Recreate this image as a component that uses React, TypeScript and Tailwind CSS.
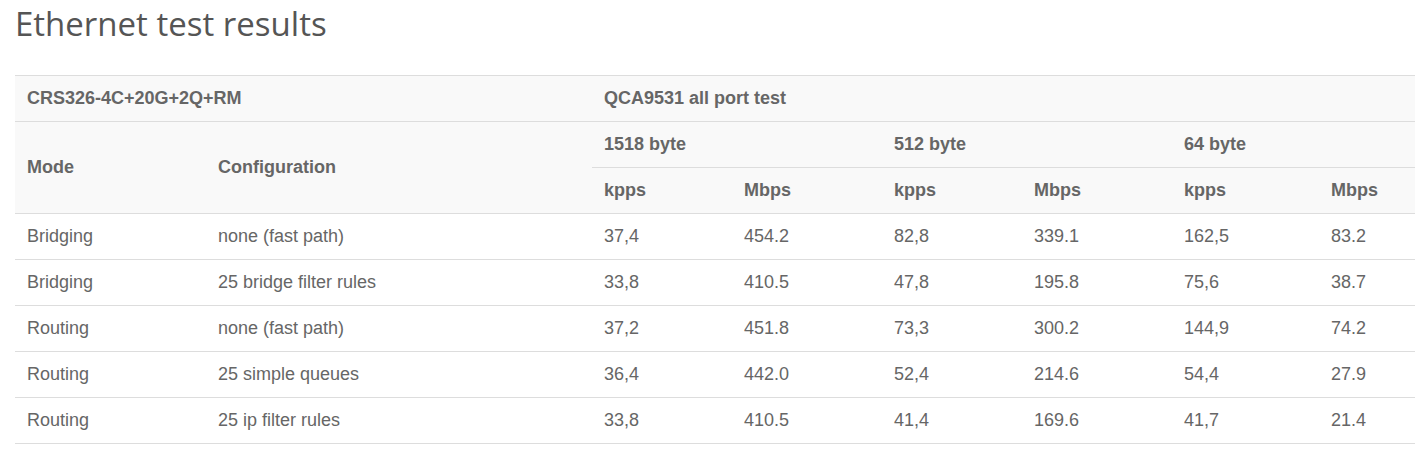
const rows = [
  ["Bridging", "none (fast path)", "37,4", "454.2", "82,8", "339.1", "162,5", "83.2"],
  ["Bridging", "25 bridge filter rules", "33,8", "410.5", "47,8", "195.8", "75,6", "38.7"],
  ["Routing", "none (fast path)", "37,2", "451.8", "73,3", "300.2", "144,9", "74.2"],
  ["Routing", "25 simple queues", "36,4", "442.0", "52,4", "214.6", "54,4", "27.9"],
  ["Routing", "25 ip filter rules", "33,8", "410.5", "41,4", "169.6", "41,7", "21.4"],
];

const colWidths = [
  "w-[191px]",
  "w-[386px]",
  "w-[140px]",
  "w-[150px]",
  "w-[140px]",
  "w-[150px]",
  "w-[147px]",
  "w-[96px]",
];

const th = "border-t border-[#dddddd] px-3 py-3 text-left align-middle font-bold leading-[21px]";
const td = "border-t border-[#dddddd] px-3 py-3 text-left align-middle leading-[21px]";

export default function App() {
  return (
    <div className="min-h-[462px] bg-white px-[15px]">
      <h1 className="pt-[6px] font-['Open_Sans',sans-serif] text-[33px] font-normal leading-[1.1] text-[#555555]">
        Ethernet test results
      </h1>
      <table className="mt-[33px] w-[1400px] table-fixed border-collapse font-['Liberation_Sans',Arial,sans-serif] text-[18px] text-[#666666]">
        <colgroup>
          {colWidths.map((w, i) => (
            <col key={i} className={w} />
          ))}
        </colgroup>
        <thead className="bg-[#f9f9f9]">
          <tr>
            <th colSpan={2} className={th}>
              CRS326-4C+20G+2Q+RM
            </th>
            <th colSpan={6} className={th}>
              QCA9531 all port test
            </th>
          </tr>
          <tr>
            <th rowSpan={2} className={th}>
              Mode
            </th>
            <th rowSpan={2} className={th}>
              Configuration
            </th>
            <th colSpan={2} className={th}>
              1518 byte
            </th>
            <th colSpan={2} className={th}>
              512 byte
            </th>
            <th colSpan={2} className={th}>
              64 byte
            </th>
          </tr>
          <tr>
            <th className={th}>kpps</th>
            <th className={th}>Mbps</th>
            <th className={th}>kpps</th>
            <th className={th}>Mbps</th>
            <th className={th}>kpps</th>
            <th className={th}>Mbps</th>
          </tr>
        </thead>
        <tbody>
          {rows.map((r, i) => (
            <tr key={i} className="border-b border-[#dddddd]">
              {r.map((c, j) => (
                <td key={j} className={td}>
                  {c}
                </td>
              ))}
            </tr>
          ))}
        </tbody>
      </table>
    </div>
  );
}
